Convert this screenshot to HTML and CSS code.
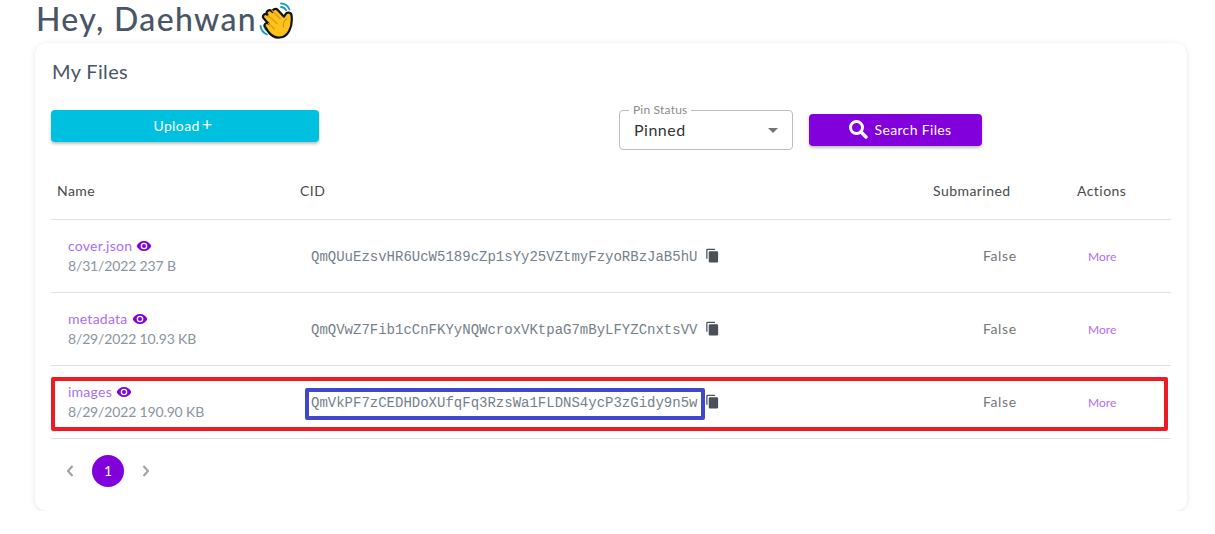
FILE: index.html
```html
<!DOCTYPE html>
<html lang="en">
<head>
  <meta charset="UTF-8">
  <title>My Files</title>
  <link rel="stylesheet" href="styles.css">
</head>
<body>
  <h1 class="greeting">Hey, Daehwan
    <svg class="wave" viewBox="0 0 36 38" width="36" height="38">
      <path d="M22 2.500c3.500 0 7 2.500 8.500 6M22 6c2 0 4 1.200 5 3.200M1.500 25c.5 3.500 3 7 6.500 8.500M5 25c.5 2 1.500 3.800 3.500 5" fill="none" stroke="#1b9bbd" stroke-width="1.800" stroke-linecap="round"/>
      <path d="M21 36.500c-5 .5-9-2-11.500-5.500L6 25.500c-1.500-2.500 1.500-4.500 3.500-3L7 20l-2.500-3c-1.800-2.500 1.500-5 3.500-3.500l.5.500-.5-1c-1.500-2.500 2-5 4-3.300l1.500 1.300c-.5-2.500 3-4 5-2.300l6.500 7 1.500-2.500c1.500-2.500 5.500-2 6 1 .8 5.500 0 11.500-2.500 16-2 3.500-5 6-9 6.300z" fill="#fcc21b" stroke="#111" stroke-width="2.200" stroke-linejoin="round"/>
      <path d="M9 14.500l9 8M13 9.500l8 8M9.500 22.500l6 5.500M27.500 18c-2.500 2-3.500 5-3 8" fill="none" stroke="#d99a10" stroke-width="1.200" stroke-linecap="round"/>
    </svg>
  </h1>

  <div class="card">
    <h2 class="card-title">My Files</h2>

    <div class="toolbar">
      <button class="btn btn-upload">Upload<span class="plus">+</span></button>
      <div class="toolbar-right">
        <div class="select-box">
          <span class="select-label">Pin Status</span>
          <span class="select-value">Pinned</span>
          <span class="select-arrow"></span>
        </div>
        <button class="btn btn-search">
          <svg class="search-icon" viewBox="0 0 20 20" width="20" height="20">
            <circle cx="8.500" cy="8.500" r="6" fill="none" stroke="#fff" stroke-width="3"/>
            <path d="M13 13l5 5" stroke="#fff" stroke-width="3.400" stroke-linecap="round"/>
          </svg>
          Search Files
        </button>
      </div>
    </div>

    <div class="file-table">
      <div class="table-row table-head">
        <div>Name</div>
        <div>CID</div>
        <div>Submarined</div>
        <div>Actions</div>
      </div>

      <div class="table-row file-row">
        <div class="name-cell">
          <div class="file-name">cover.json
            <svg class="eye" viewBox="0 0 24 24" width="16" height="16"><path d="M12 4.500C7 4.500 2.700 7.600 1 12c1.700 4.400 6 7.500 11 7.500s9.300-3.100 11-7.500c-1.700-4.400-6-7.500-11-7.500zM12 17a5 5 0 1 1 0-10 5 5 0 0 1 0 10zm0-8a3 3 0 1 0 0 6 3 3 0 0 0 0-6z"/></svg>
          </div>
          <div class="file-meta">8/31/2022 237 B</div>
        </div>
        <div class="cid-cell">
          <span class="cid">QmQUuEzsvHR6UcW5189cZp1sYy25VZtmyFzyoRBzJaB5hU</span>
          <svg class="copy" viewBox="0 0 24 24" width="16" height="16"><path d="M16 1H4a2 2 0 0 0-2 2v14h2V3h12V1zm3 4H8a2 2 0 0 0-2 2v14a2 2 0 0 0 2 2h11a2 2 0 0 0 2-2V7a2 2 0 0 0-2-2z"/></svg>
        </div>
        <div class="sub-cell">False</div>
        <div class="more-cell">More</div>
      </div>

      <div class="table-row file-row">
        <div class="name-cell">
          <div class="file-name">metadata
            <svg class="eye" viewBox="0 0 24 24" width="16" height="16"><path d="M12 4.500C7 4.500 2.700 7.600 1 12c1.700 4.400 6 7.500 11 7.500s9.300-3.100 11-7.500c-1.700-4.400-6-7.500-11-7.500zM12 17a5 5 0 1 1 0-10 5 5 0 0 1 0 10zm0-8a3 3 0 1 0 0 6 3 3 0 0 0 0-6z"/></svg>
          </div>
          <div class="file-meta">8/29/2022 10.93 KB</div>
        </div>
        <div class="cid-cell">
          <span class="cid">QmQVwZ7Fib1cCnFKYyNQWcroxVKtpaG7mByLFYZCnxtsVV</span>
          <svg class="copy" viewBox="0 0 24 24" width="16" height="16"><path d="M16 1H4a2 2 0 0 0-2 2v14h2V3h12V1zm3 4H8a2 2 0 0 0-2 2v14a2 2 0 0 0 2 2h11a2 2 0 0 0 2-2V7a2 2 0 0 0-2-2z"/></svg>
        </div>
        <div class="sub-cell">False</div>
        <div class="more-cell">More</div>
      </div>

      <div class="table-row file-row marked-row">
        <div class="name-cell">
          <div class="file-name">images
            <svg class="eye" viewBox="0 0 24 24" width="16" height="16"><path d="M12 4.500C7 4.500 2.700 7.600 1 12c1.700 4.400 6 7.500 11 7.500s9.300-3.100 11-7.500c-1.700-4.400-6-7.500-11-7.500zM12 17a5 5 0 1 1 0-10 5 5 0 0 1 0 10zm0-8a3 3 0 1 0 0 6 3 3 0 0 0 0-6z"/></svg>
          </div>
          <div class="file-meta">8/29/2022 190.90 KB</div>
        </div>
        <div class="cid-cell">
          <span class="cid">QmVkPF7zCEDHDoXUfqFq3RzsWa1FLDNS4ycP3zGidy9n5w</span>
          <svg class="copy" viewBox="0 0 24 24" width="16" height="16"><path d="M16 1H4a2 2 0 0 0-2 2v14h2V3h12V1zm3 4H8a2 2 0 0 0-2 2v14a2 2 0 0 0 2 2h11a2 2 0 0 0 2-2V7a2 2 0 0 0-2-2z"/></svg>
        </div>
        <div class="sub-cell">False</div>
        <div class="more-cell">More</div>
        <div class="red-mark"></div>
        <div class="blue-mark"></div>
      </div>
    </div>

    <div class="pager">
      <svg class="pager-arrow" viewBox="0 0 10 14" width="10" height="14"><path d="M7.500 2L3 7l4.500 5" fill="none" stroke="#a0a0a0" stroke-width="2"/></svg>
      <span class="page-num">1</span>
      <svg class="pager-arrow" viewBox="0 0 10 14" width="10" height="14"><path d="M2.500 2L7 7l-4.500 5" fill="none" stroke="#a0a0a0" stroke-width="2"/></svg>
    </div>
  </div>
</body>
</html>
```

FILE: styles.css
```css
/* page */
body {
  margin: 0;
  padding: 0 28px 0 35px;
  font-family: "Lato", "Noto Sans", sans-serif;
  background: #fff;
  color: #4a5568;
}
.greeting {
  margin: 0;
  height: 43px;
  display: flex;
  align-items: flex-start;
  font-size: 32px;
  line-height: 38px;
  font-weight: 500;
  letter-spacing: 1.35px;
  padding-left: 1px;
}
.wave {
  margin: 1px 0 0 2px;
}

/* card */
.card {
  width: 1152px;
  height: 468px;
  box-sizing: border-box;
  padding: 15px 16px 0;
  border-radius: 12px;
  background: #fff;
  box-shadow: 0 1px 6px rgba(0,0,0,0.1);
}
.card-title {
  margin: 0 0 0 1px;
  font-size: 20px;
  line-height: 26px;
  font-weight: 400;
  letter-spacing: 0.35px;
}

/* toolbar */
.toolbar {
  display: flex;
  justify-content: space-between;
  margin-top: 26px;
  height: 40px;
}
.btn {
  border: none;
  border-radius: 4px;
  color: #fff;
  font-family: inherit;
  font-size: 14px;
  padding: 0 0 2px;
  box-shadow: 0 2px 3px rgba(0,0,0,0.25);
}
.btn-upload {
  width: 268px;
  height: 32px;
  padding-right: 4px;
  background: #00c0e0;
  letter-spacing: 0.4px;
}
.plus {
  font-size: 18px;
  line-height: 14px;
  margin-left: 2px;
}
.toolbar-right {
  display: flex;
  align-items: center;
  gap: 16px;
  margin-right: 189px;
}
.select-box {
  position: relative;
  width: 174px;
  height: 40px;
  box-sizing: border-box;
  border: 1px solid #bdbdbd;
  border-radius: 4px;
  padding: 9px 14px;
  font-size: 16px;
  color: #333;
  letter-spacing: 0.5px;
}
.select-label {
  position: absolute;
  top: -8px;
  left: 9px;
  padding: 0 4px;
  background: #fff;
  font-size: 12px;
  line-height: 14px;
  letter-spacing: 0.2px;
  color: #8a8a8a;
}
.select-arrow {
  position: absolute;
  top: 17px;
  right: 14px;
  border-left: 5px solid transparent;
  border-right: 5px solid transparent;
  border-top: 5px solid #757575;
}
.btn-search {
  width: 173px;
  height: 32px;
  padding-left: 8px;
  background: #8200db;
  display: flex;
  align-items: center;
  justify-content: center;
  gap: 7px;
  letter-spacing: 0.35px;
}

/* table */
.file-table {
  margin-top: 11px;
  width: 1120px;
}
.table-row {
  display: grid;
  grid-template-columns: 243px 633px 144px 100px;
  align-items: center;
  border-bottom: 1px solid #e0e0e0;
  box-sizing: border-box;
}
.table-head {
  height: 59px;
  font-size: 14px;
  letter-spacing: 0.45px;
  color: #4a4a4a;
}
.table-head div {
  padding-left: 6px;
}
.file-row {
  position: relative;
  height: 73px;
}
.name-cell {
  padding-left: 17px;
}
.file-name {
  display: flex;
  align-items: center;
  gap: 4px;
  font-size: 14px;
  line-height: 20px;
  letter-spacing: 0.25px;
  color: #a86ff2;
}
.eye {
  fill: #8200db;
}
.file-meta {
  font-size: 14px;
  line-height: 20px;
  letter-spacing: -0.15px;
  color: #8a94a0;
}
.cid-cell {
  display: flex;
  align-items: center;
  gap: 8px;
  padding: 0 0 1px 17px;
  font-size: 14px;
  color: #75808c;
}
.cid {
  font-family: "Liberation Mono", "DejaVu Sans Mono", monospace;
  padding-top: 2px;
}
.copy {
  width: 15px;
  height: 15px;
  fill: #4a4f58;
}
.sub-cell {
  padding: 0 0 2px 56px;
  font-size: 14px;
  letter-spacing: 0.6px;
  color: #777;
}
.more-cell {
  padding-left: 17px;
  font-size: 12px;
  color: #b26cf5;
}

/* annotation boxes drawn over the last row */
.red-mark {
  position: absolute;
  left: 0;
  top: 11px;
  width: 1117px;
  height: 54px;
  box-sizing: border-box;
  border: 4px solid #ed1c24;
  border-radius: 2px;
}
.blue-mark {
  position: absolute;
  left: 254px;
  top: 22px;
  width: 400px;
  height: 32px;
  box-sizing: border-box;
  border: 4px solid #3f48cc;
  border-radius: 2px;
}

/* pager */
.pager {
  display: flex;
  align-items: center;
  margin-top: 16px;
  padding-left: 14px;
}
.page-num {
  width: 32px;
  height: 32px;
  margin: 0 17px 0 17px;
  border-radius: 50%;
  background: #8200db;
  color: #fff;
  font-size: 14px;
  line-height: 32px;
  text-align: center;
}
```
